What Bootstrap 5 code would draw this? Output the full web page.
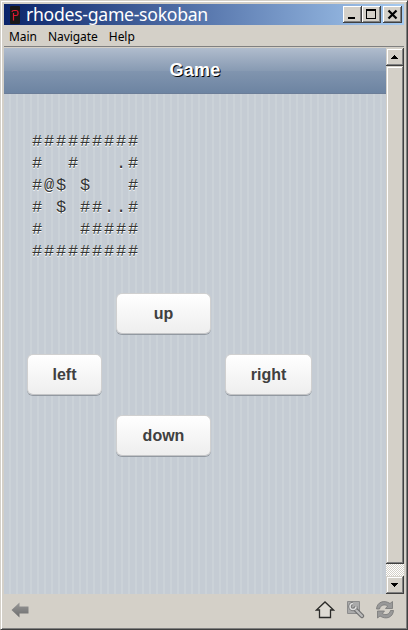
<!DOCTYPE html>
<html lang="en">
<head>
<meta charset="utf-8">
<meta name="viewport" content="width=device-width, initial-scale=1">
<title>rhodes-game-sokoban</title>
<link href="https://cdn.jsdelivr.net/npm/bootstrap@5.3.0/dist/css/bootstrap.min.css" rel="stylesheet">
<style>
body{background:#d4d0c8;font-family:"Liberation Sans",Arial,sans-serif}
.win{width:408px;height:630px;background:#d4d0c8;padding:2px;border:1px solid;border-color:#d4d0c8 #404040 #404040 #d4d0c8;box-shadow:inset 1px 1px #fff,inset -1px -1px #808080}
.win-inner{padding:1px}
.titlebar{height:21px;background:linear-gradient(90deg,#0a246a,#a6caf0);font:17.6px/21px "Noto Sans",Tahoma,sans-serif;color:#fff;padding:0 2px 0 6px}
.title-text{margin-left:6px;width:182px;white-space:nowrap;letter-spacing:-.27px}
.wbtn{width:19px;height:17px;background:#d4d0c8;border:0;padding:0;box-shadow:inset -1px -1px #404040,inset 1px 1px #fff,inset -2px -2px #808080}
.close-w{margin-left:2px}
.menu{height:22px;padding-left:5px;gap:11px;font:12px/23px "Noto Sans",Tahoma,sans-serif;color:#000;border-bottom:1px solid #808080}
.menu span{white-space:nowrap;letter-spacing:-.05px}
.view{height:547px;border-top:1px solid #d4d0c8}
.head{height:46px;background:linear-gradient(#b0bccd 0,#889bb3 50%,#8195af 51%,#6d84a2 100%);border-bottom:1px solid #6b7d98;color:#fff;font-weight:700;font-size:18px;letter-spacing:.3px;text-shadow:1px 1px 0 #000}
.page{width:382px;background:repeating-linear-gradient(90deg,#c5ccd4 0 5px,#cbd2d8 5px 7px)}
.board{margin:37px 0 0 28px;height:132px;font:17px/22px "Liberation Mono","Courier New",monospace;letter-spacing:1.8px;color:#333;text-shadow:0 1px 0 #fff;overflow:visible}
.pad{display:grid;grid-template-columns:75px 95px 87px;column-gap:14px;row-gap:20px;margin:30px 0 0 23px}
.pad .btn{height:41px;border-radius:6px;padding:0;border:1px solid #d0d0d0;border-bottom-color:#c4c5c7;background:linear-gradient(#fff,#eee);color:#404040;font-weight:700;font-size:16px;box-shadow:0 1px 0 #9299a1;line-height:40px}
.pad .mid{grid-column:2}
.pad .lft{grid-column:1}
.pad .rgt{grid-column:3}
.scroll{width:18px;background:repeating-conic-gradient(#fff 0 25%,#d4d0c8 0 50%) 0 0/2px 2px}
.sb{background:#d4d0c8;box-shadow:inset -1px -1px #404040,inset 1px 1px #d4d0c8,inset -2px -2px #808080,inset 2px 2px #fff}
.arrow{height:18px}
.thumb{height:498px}
.foot{height:33px;padding:0 9px 1px 6px}
svg{display:block}
</style>
<script src="https://cdn.jsdelivr.net/npm/bootstrap@5.3.0/dist/js/bootstrap.bundle.min.js"></script>
</head>
<body>
<div class="win overflow-hidden"><div class="win-inner">
<div class="titlebar d-flex align-items-center">
<svg width="10" height="18" viewBox="0 0 10 18"><rect width="10" height="18" rx="1" fill="#181818"/><path d="M2 6Q2 4.500 4 4.500H6Q8 4.500 8 6.500V8Q8 9.500 6 9.500H3.500M3.500 7V14.500" fill="none" stroke="#e01830" stroke-width="1.200"/></svg>
<span class="title-text">rhodes-game-sokoban</span>
<div class="d-flex ms-auto">
<button class="wbtn" aria-label="Minimize"><svg width="19" height="17"><path d="M5 11h7v2H5z"/></svg></button>
<button class="wbtn" aria-label="Maximize"><svg width="19" height="17"><path d="M4 3h10v10H4zM5 5v7h8V5z" fill-rule="evenodd"/></svg></button>
<button class="wbtn close-w" aria-label="Close"><svg width="19" height="17"><path d="M5.500 4.500l8 8M13.500 4.500l-8 8" stroke="#000" stroke-width="2.200"/></svg></button>
</div></div>
<div class="menu d-flex"><span>Main</span><span>Navigate</span><span>Help</span></div>
<div class="view d-flex">
<main class="page">
<div class="head d-flex align-items-center justify-content-center">Game</div>
<pre class="board">#########
#  #   .#
#@$ $   #
# $ ##..#
#   #####
#########</pre>
<div class="pad">
<button class="btn mid">up</button>
<button class="btn lft">left</button>
<button class="btn rgt">right</button>
<button class="btn mid">down</button>
</div>
</main>
<div class="scroll d-flex flex-column">
<div class="sb arrow"><svg width="18" height="18"><path d="M8 7h1v1h1v1h1v1h1v1H5v-1h1V9h1V8h1z"/></svg></div>
<div class="sb thumb"></div>
<div class="sb arrow mt-auto"><svg width="18" height="18"><path d="M5 7h7v1h-1v1h-1v1H9v1H8v-1H7V9H6V8H5z"/></svg></div>
</div>
</div>
<div class="foot d-flex align-items-center">
<svg width="20" height="18" viewBox="0 0 20 18"><defs><linearGradient id="g" x2="0" y2="1"><stop stop-color="#999"/><stop offset="1" stop-color="#6c6c6c"/></linearGradient></defs><path d="M1.500 9L9.500 1.500V5.500H18.500V12.500H9.500V16.500z" fill="url(#g)"/></svg>
<div class="d-flex ms-auto">
<svg width="20" height="20" viewBox="0 0 20 20"><path d="M1.500 10L10 2l8.500 8h-3v7.500h-11V10z" fill="#dedbd4" stroke="#2b2b29" stroke-width="1.300"/></svg>
<svg class="ms-2 me-2" width="24" height="20" viewBox="0 0 24 20"><path d="M4.500 1.500h12v12h-12z" fill="#aaa" stroke="#8c8c8c"/><path d="M12 9l7 7" stroke="#707070" stroke-width="4.500" stroke-linecap="round"/><path d="M12 9l7 7" stroke="#bbb" stroke-width="2.200" stroke-linecap="round"/><path d="M10 3.500a3 3 0 1 0 3 3" fill="none" stroke="#777" stroke-width="3.400"/><path d="M10 3.500a3 3 0 1 0 3 3" fill="none" stroke="#ddd" stroke-width="1.600"/></svg>
<svg width="20" height="20" viewBox="0 0 20 20"><g fill="#999" stroke="#777" stroke-width=".8"><path d="M1.500 9C2 2 9-.5 15 3.500L17.500 1.500V8.500H10.500L12.700 6C9.500 3.800 5.500 5 4.500 9z"/><path d="M18.500 10.500C18 17.500 11 20 5 16L2.500 18V11H9.500L7.300 13.500C10.500 15.700 14.500 14.500 15.500 10.500z"/></g></svg>
</div></div>
</div></div>
</body>
</html>
